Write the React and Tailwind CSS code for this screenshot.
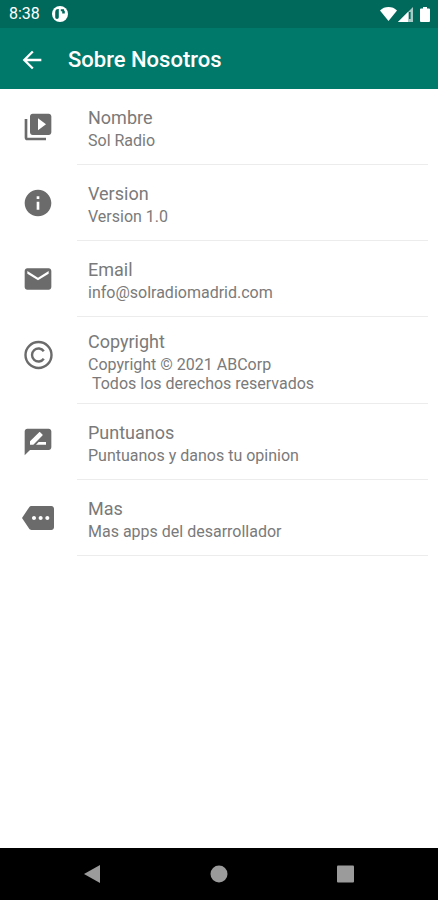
import {
  MdArrowBack,
  MdEmail,
  MdInfo,
  MdMore,
  MdRateReview,
  MdVideoLibrary,
} from "react-icons/md";

function CopyrightIcon(props) {
  return (
    <svg
      viewBox="0 0 32 32"
      fill="none"
      stroke="currentColor"
      strokeWidth="2.4"
      {...props}
    >
      <circle cx="16.5" cy="16" r="13" />
      <path d="M21.800 12.200A6.500 6.500 0 1 0 21.800 19.800" />
    </svg>
  );
}

const items = [
  { icon: MdVideoLibrary, title: "Nombre", text: "Sol Radio" },
  { icon: MdInfo, title: "Version", text: "Version 1.0" },
  { icon: MdEmail, title: "Email", text: "info@solradiomadrid.com" },
  {
    icon: CopyrightIcon,
    title: "Copyright",
    text: "Copyright © 2021 ABCorp\n Todos los derechos reservados",
  },
  {
    icon: MdRateReview,
    title: "Puntuanos",
    text: "Puntuanos y danos tu opinion",
  },
  { icon: MdMore, title: "Mas", text: "Mas apps del desarrollador" },
];

function StatusBar() {
  return (
    <div className="flex h-7 items-center justify-between bg-[#00695c] px-2 text-white">
      <div className="flex items-center gap-3 pl-px">
        <span className="text-base">8:38</span>
        <svg viewBox="0 0 16 16" className="size-4" aria-hidden="true">
          <circle cx="8" cy="8" r="8" fill="#fff" />
          <path
            d="M6.800 3v8.200a1.800 1.800 0 0 1-3.600 0V6.400A3.400 3.400 0 0 1 6.800 3zM8.800 3.200h3.200v1.600h.8v2.600h-2.600V5.200H8.800z"
            fill="#00695c"
          />
        </svg>
      </div>
      <div className="flex items-center gap-px">
        <svg viewBox="0 0 17 14" className="h-[14px] w-[17px]" aria-hidden="true">
          <path d="M8.500 14 0 3.400C2.300 1.200 5.300 0 8.500 0S14.700 1.200 17 3.400z" fill="#fff" />
        </svg>
        <svg viewBox="0 0 15 15" className="size-[15px]" aria-hidden="true">
          <path d="M15 0v15H0z" fill="#fff" fillOpacity=".65" />
          <path d="M10 5v10H0z" fill="#fff" />
          <path d="M11 5h1.600v7H11z" fill="#00695c" />
        </svg>
        <svg viewBox="0 0 10 15" className="ml-1.5 h-[15px] w-2.5" aria-hidden="true">
          <path d="M3 0h4v1.500h2a1 1 0 0 1 1 1V14a1 1 0 0 1-1 1H1a1 1 0 0 1-1-1V2.500a1 1 0 0 1 1-1h2z" fill="#fff" />
        </svg>
      </div>
    </div>
  );
}

function AboutItem({ icon: Icon, title, text }) {
  return (
    <li className="flex">
      <div className="w-[77px] shrink-0 pl-[22px] pt-[22px]">
        <Icon className="size-8 text-[#6b6b6b]" aria-hidden="true" />
      </div>
      <div className="mr-2.5 flex min-h-[76px] flex-1 flex-col justify-center gap-px border-b border-[#ececec] pb-2.5 pl-[11px] pt-[13px] text-[#7a7a7a]">
        <h2 className="text-lg leading-6">{title}</h2>
        <p className="whitespace-pre-wrap text-base leading-[19px]">{text}</p>
      </div>
    </li>
  );
}

function NavBar() {
  return (
    <nav className="flex h-[52px] items-center justify-between bg-black px-[82px]">
      <button type="button" aria-label="Atrás">
        <svg viewBox="0 0 20 20" className="size-5 fill-[#9b9b9b]" aria-hidden="true">
          <path d="M18 1v18L2 10z" />
        </svg>
      </button>
      <button type="button" aria-label="Inicio">
        <svg viewBox="0 0 20 20" className="size-5 fill-[#9b9b9b]" aria-hidden="true">
          <circle cx="10" cy="10" r="8.500" />
        </svg>
      </button>
      <button type="button" aria-label="Recientes">
        <svg viewBox="0 0 20 20" className="size-5 fill-[#9b9b9b]" aria-hidden="true">
          <rect x="1" y="1.500" width="17" height="17" rx="1" />
        </svg>
      </button>
    </nav>
  );
}

export default function App() {
  return (
    <div className="flex min-h-screen flex-col bg-white font-['Roboto',sans-serif]">
      <StatusBar />
      <header className="flex h-[61px] items-center gap-[22px] bg-[#00796b] pl-[18px] pt-0.5 text-white">
        <button type="button" aria-label="Volver">
          <MdArrowBack className="size-7" />
        </button>
        <h1 className="text-[22px] font-medium leading-8">Sobre Nosotros</h1>
      </header>
      <main className="flex-1">
        <ul>
          {items.map((item) => (
            <AboutItem key={item.title} {...item} />
          ))}
        </ul>
      </main>
      <NavBar />
    </div>
  );
}
